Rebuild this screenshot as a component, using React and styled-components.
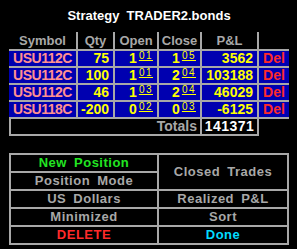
import React from 'react'
import styled, { createGlobalStyle } from 'styled-components';

const GRID = '#a8a8a8';
const BLUE = '#0000b0';
const COLS = '67px 35px 42px 41px 55px 30px';

const Global = createGlobalStyle`
  html, body {
    margin: 0;
    background: #000;
  }
  body {
    font-family: "Liberation Sans", Arial, sans-serif;
    font-weight: bold;
  }
`;

const Page = styled.div`
  width: 297px;
  height: 249px;
  box-sizing: border-box;
  padding: 0 8px 0 9px;
  background: #000;
`;

const Title = styled.div`
  height: 32px;
  line-height: 32px;
  text-align: center;
  color: #fff;
  font-size: 13px;
  white-space: pre;
`;

const HeadRow = styled.div`
  display: grid;
  grid-template-columns: ${COLS};
  column-gap: 2px;
  background: ${GRID};
  height: 17px;
`;

const HeadCell = styled.div`
  background: #000;
  color: ${GRID};
  font-size: 13px;
  line-height: 17px;
  text-align: center;
`;

const Body = styled.div`
  display: grid;
  grid-template-columns: ${COLS};
  grid-auto-rows: 15px;
  gap: 2px;
  padding: 2px 0;
  background: ${GRID};
`;

const Cell = styled.div`
  background: ${BLUE};
  color: ${p => p.color || '#ffff00'};
  font-size: 14px;
  line-height: 15px;
  height: 15px;
  overflow: hidden;
  text-align: ${p => p.align || 'right'};
  padding-right: ${p => (p.align ? 0 : 4)}px;
  white-space: nowrap;
  letter-spacing: ${p => p.spacing || 0}px;
`;

const Frac = styled.span`
  font-size: 10px;
  font-weight: normal;
  line-height: 0;
  letter-spacing: 1.5px;
  margin-left: 2px;
  vertical-align: 4px;
  text-decoration: underline;
  text-underline-offset: 1px;
`;

const TotalsBox = styled.div`
  display: grid;
  grid-template-columns: 189px 55px;
  grid-template-rows: 15px;
  column-gap: 2px;
  width: 250px;
  padding: 0 2px 2px 2px;
  box-sizing: border-box;
  background: ${GRID};
`;

const TotalsCell = styled.div`
  background: #000;
  color: ${p => p.color};
  font-size: 14px;
  line-height: 15px;
  overflow: hidden;
  text-align: ${p => p.align};
  padding-right: ${p => (p.align === 'right' ? 3 : 0)}px;
  letter-spacing: ${p => p.spacing || 0}px;
`;

const ButtonPanel = styled.div`
  display: grid;
  grid-template-columns: 146px 128px;
  grid-template-rows: repeat(5, 16px);
  grid-auto-flow: column;
  gap: 2px;
  padding: 2px;
  margin-top: 17px;
  background: ${GRID};
`;

const PanelButton = styled.div`
  grid-row: span ${p => p.span || 1};
  display: flex;
  align-items: center;
  justify-content: center;
  background: #000;
  color: ${p => p.color || GRID};
  font-size: 13px;
  line-height: 16px;
  letter-spacing: 0.5px;
  word-spacing: 3px;
  cursor: pointer;
`;

const rows = [
  { sym: 'USU112C', qty: '75', open: ['1', '01'], close: ['1', '05'], pnl: '3562' },
  { sym: 'USU112C', qty: '100', open: ['1', '01'], close: ['2', '04'], pnl: '103188' },
  { sym: 'USU112C', qty: '46', open: ['1', '03'], close: ['2', '04'], pnl: '46029' },
  { sym: 'USU118C', qty: '-200', open: ['0', '02'], close: ['0', '03'], pnl: '-6125' },
];

const Price = ({ value }) => (
  <Cell>
    {value[0]}
    <Frac>{value[1]}</Frac>
  </Cell>
);

export default function App() {
  return (
    <Page>
      <Global />
      <Title>{'Strategy  TRADER2.bonds'}</Title>

      <HeadRow>
        <HeadCell>Symbol</HeadCell>
        <HeadCell>Qty</HeadCell>
        <HeadCell>Open</HeadCell>
        <HeadCell>Close</HeadCell>
        <HeadCell>P&amp;L</HeadCell>
        <HeadCell />
      </HeadRow>

      <Body>
        {rows.map((r, i) => (
          <React.Fragment key={i}>
            <Cell align='center' color='#ff9090' spacing={-0.5}>{r.sym}</Cell>
            <Cell>{r.qty}</Cell>
            <Price value={r.open} />
            <Price value={r.close} />
            <Cell>{r.pnl}</Cell>
            <Cell align='center' color='#ff2a2a'>Del</Cell>
          </React.Fragment>
        ))}
      </Body>

      <TotalsBox>
        <TotalsCell align='right' color={GRID}>Totals</TotalsCell>
        <TotalsCell align='center' color='#fff' spacing={0.5}>141371</TotalsCell>
      </TotalsBox>

      <ButtonPanel>
        <PanelButton color='#22e622'>New Position</PanelButton>
        <PanelButton>Position Mode</PanelButton>
        <PanelButton>US Dollars</PanelButton>
        <PanelButton>Minimized</PanelButton>
        <PanelButton color='#ff2a2a'>DELETE</PanelButton>
        <PanelButton span={2}>Closed Trades</PanelButton>
        <PanelButton>Realized P&amp;L</PanelButton>
        <PanelButton>Sort</PanelButton>
        <PanelButton color='#00dcff'>Done</PanelButton>
      </ButtonPanel>
    </Page>
  )
}
